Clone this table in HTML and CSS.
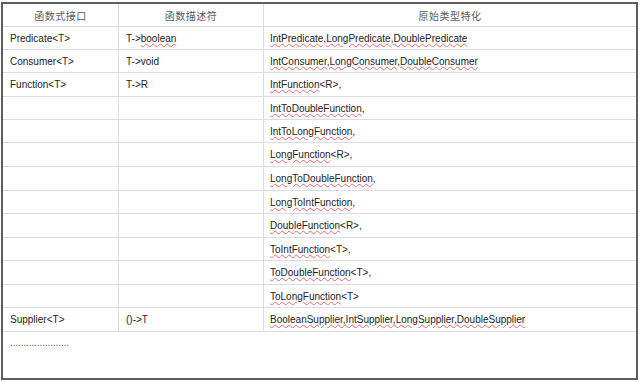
FILE: index.html
```html
<!DOCTYPE html>
<html lang="zh">
<head>
<meta charset="utf-8">
<title>函数式接口</title>
<link rel="stylesheet" href="styles.css">
</head>
<body>
<div class="frame">
  <div class="table">
    <div class="cell head">函数式接口</div>
    <div class="cell head">函数描述符</div>
    <div class="cell head last">原始类型特化</div>

    <div class="cell">Predicate&lt;T&gt;</div>
    <div class="cell">T-&gt;<span class="sp">boolean</span></div>
    <div class="cell c3 last"><span class="sp">IntPredicate,LongPredicate,DoublePredicate</span></div>

    <div class="cell">Consumer&lt;T&gt;</div>
    <div class="cell">T-&gt;void</div>
    <div class="cell c3 last"><span class="sp">IntConsumer,LongConsumer,DoubleConsumer</span></div>

    <div class="cell">Function&lt;T&gt;</div>
    <div class="cell">T-&gt;R</div>
    <div class="cell c3 last"><span class="sp">IntFunction</span>&lt;R&gt;,</div>

    <div class="cell"></div>
    <div class="cell"></div>
    <div class="cell c3 last"><span class="sp">IntToDoubleFunction</span>,</div>

    <div class="cell"></div>
    <div class="cell"></div>
    <div class="cell c3 last"><span class="sp">IntToLongFunction</span>,</div>

    <div class="cell"></div>
    <div class="cell"></div>
    <div class="cell c3 last"><span class="sp">LongFunction</span>&lt;R&gt;,</div>

    <div class="cell"></div>
    <div class="cell"></div>
    <div class="cell c3 last"><span class="sp">LongToDoubleFunction</span>,</div>

    <div class="cell"></div>
    <div class="cell"></div>
    <div class="cell c3 last"><span class="sp">LongToIntFunction</span>,</div>

    <div class="cell"></div>
    <div class="cell"></div>
    <div class="cell c3 last"><span class="sp">DoubleFunction</span>&lt;R&gt;,</div>

    <div class="cell"></div>
    <div class="cell"></div>
    <div class="cell c3 last"><span class="sp">ToIntFunction</span>&lt;T&gt;,</div>

    <div class="cell"></div>
    <div class="cell"></div>
    <div class="cell c3 last"><span class="sp">ToDoubleFunction</span>&lt;T&gt;,</div>

    <div class="cell"></div>
    <div class="cell"></div>
    <div class="cell c3 last"><span class="sp">ToLongFunction</span>&lt;T&gt;</div>

    <div class="cell">Supplier&lt;T&gt;</div>
    <div class="cell">()-&gt;T</div>
    <div class="cell c3 last"><span class="sp">BooleanSupplier,IntSupplier,LongSupplier,DoubleSupplier</span></div>
  </div>
  <div class="dots">......................</div>
</div>
</body>
</html>
```
FILE: styles.css
```css
html, body {
  margin: 0;
  padding: 0;
  background: #ffffff;
}

body {
  font-family: "Liberation Sans", Arial, "Noto Sans CJK SC", sans-serif;
  font-size: 10px;
  color: #222222;
}

.frame {
  width: 633px;
  height: 374px;
  margin: 2px 2px 0 1px;
  border: 2px solid #5e5e5e;
  background: #ffffff;
}

.table {
  display: grid;
  grid-template-columns: 116px 145px 1fr;
  grid-template-rows: 23px 23px 23px 24px 23px 23px 24px 24px 23px 24px 23px 24px 23px 24px;
}

.cell {
  display: flex;
  align-items: center;
  padding-left: 7px;
  border-right: 1px solid #dcdcdc;
  border-bottom: 1px solid #dcdcdc;
  white-space: nowrap;
  overflow: hidden;
}

.cell.last {
  border-right: none;
}

.cell.c3 {
  padding-left: 6px;
}

.head {
  justify-content: center;
  padding-left: 0;
  font-family: "Noto Sans CJK SC", sans-serif;
  font-size: 10px;
  color: #5a5a5a;
  letter-spacing: 0.5px;
}

.sp {
  text-decoration-line: underline;
  text-decoration-style: wavy;
  text-decoration-color: #ee6a6a;
  text-decoration-thickness: 1px;
  text-underline-offset: 1px;
}

.dots {
  padding: 5px 0 0 7px;
  font-size: 10px;
  color: #555555;
  letter-spacing: -0.1px;
}
```
